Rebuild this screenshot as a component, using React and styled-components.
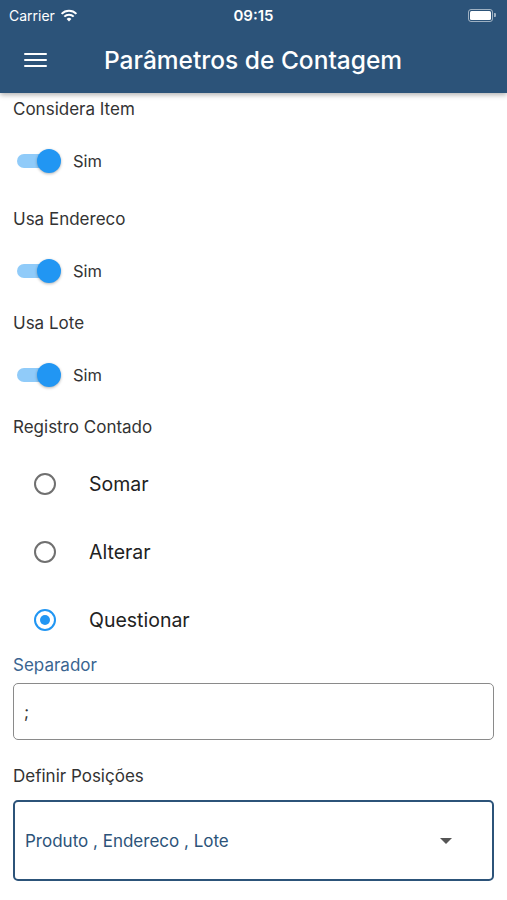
import styled, { createGlobalStyle } from "styled-components";

const GlobalStyle = createGlobalStyle`
    body {
        margin: 0;
        background: #fff;
        font-family: "Inter", "Liberation Sans", sans-serif;
    }
`;

const Page = styled.div`
    width: 507px;
    min-height: 900px;
    background: #fff;
`;

const Header = styled.header`
    background-color: #2c5379;
    box-shadow: 0 2px 5px rgba(0, 0, 0, 0.3);
    position: relative;
    z-index: 1;
`;

const StatusBar = styled.div`
    height: 30px;
    padding: 0 9px;
    display: grid;
    grid-template-columns: 1fr auto 1fr;
    align-items: center;
    color: #fff;
    font-size: 14px;
`;

const Carrier = styled.div`
    display: flex;
    align-items: center;
    gap: 5px;
`;

const Time = styled.div`
    font-weight: 600;
    font-size: 15px;
`;

const Battery = styled.div`
    justify-self: end;
    display: flex;
    align-items: center;
    margin-right: 2px;
`;

const BatteryBody = styled.div`
    width: 21px;
    height: 9px;
    border: 1.5px solid rgba(255, 255, 255, 0.55);
    border-radius: 3px;
    padding: 1px;
    box-sizing: content-box;

    &::after {
        content: "";
        display: block;
        width: 100%;
        height: 100%;
        background: #fff;
        border-radius: 1.5px;
    }
`;

const BatteryNub = styled.div`
    width: 2px;
    height: 4px;
    margin-left: 1px;
    background: rgba(255, 255, 255, 0.55);
    border-radius: 0 1px 1px 0;
`;

const AppBar = styled.div`
    height: 63px;
    display: flex;
    align-items: center;
    padding-left: 24px;
    padding-bottom: 3px;
    box-sizing: border-box;
`;

const MenuButton = styled.div`
    width: 23px;
    display: flex;
    flex-direction: column;
    gap: 3.5px;

    span {
        height: 2.5px;
        background: #fff;
        border-radius: 1px;
    }
`;

const Title = styled.h1`
    margin: 0 0 0 57px;
    color: #fff;
    font-size: 24.5px;
    font-weight: 500;
`;

const Content = styled.main`
    padding: 6px 13px 0;
`;

const FieldLabel = styled.div`
    font-size: 17px;
    line-height: 20px;
    color: ${(p) => (p.$accent ? "#3a6591" : "#333")};
    margin-top: ${(p) => p.$gap || 0}px;
`;

const ToggleRow = styled.div`
    height: 48px;
    margin-top: 18px;
    display: flex;
    align-items: center;
    gap: 13px;
    padding-left: 4px;
    font-size: 16.5px;
    color: #333;
`;

const Track = styled.div`
    position: relative;
    width: 40px;
    height: 14px;
    border-radius: 7px;
    background: #90cbf9;
    margin-right: 3px;
`;

const Thumb = styled.div`
    position: absolute;
    top: -5px;
    right: -4px;
    width: 24px;
    height: 24px;
    border-radius: 50%;
    background: #2196f3;
    box-shadow: 0 1px 3px rgba(0, 0, 0, 0.3);
`;

const RadioList = styled.div`
    margin-top: 13px;
    display: flex;
    flex-direction: column;
`;

const RadioRow = styled.div`
    height: 68px;
    display: flex;
    align-items: center;
    padding-left: 21px;
    gap: 33px;
    font-size: 19.5px;
    color: #222;
`;

const RadioCircle = styled.div`
    width: 18px;
    height: 18px;
    border-radius: 50%;
    border: 2px solid ${(p) => (p.$checked ? "#2196f3" : "#707070")};
    display: flex;
    align-items: center;
    justify-content: center;

    &::after {
        content: "";
        width: 10px;
        height: 10px;
        border-radius: 50%;
        background: ${(p) => (p.$checked ? "#2196f3" : "transparent")};
    }
`;

const TextBox = styled.div`
    margin-top: 8px;
    height: 57px;
    box-sizing: border-box;
    border: 1px solid #8a8a8a;
    border-radius: 5px;
    display: flex;
    align-items: center;
    padding: 0 10px;
    font-size: 17px;
    color: #333;
`;

const SelectBox = styled.div`
    margin-top: 14px;
    height: 81px;
    box-sizing: border-box;
    border: 2px solid #2c5379;
    border-radius: 5px;
    display: flex;
    align-items: center;
    justify-content: space-between;
    padding: 0 40px 0 10px;
    font-size: 17px;
    color: #2c5379;
`;

const Caret = styled.div`
    width: 0;
    height: 0;
    border-left: 6px solid transparent;
    border-right: 6px solid transparent;
    border-top: 6px solid #555;
`;

const toggles = [
    { label: "Considera Item", gap: 0 },
    { label: "Usa Endereco", gap: 24 },
    { label: "Usa Lote", gap: 18 },
];

const radios = [
    { label: "Somar", checked: false },
    { label: "Alterar", checked: false },
    { label: "Questionar", checked: true },
];

const WifiIcon = () => (
    <svg width="18" height="13" viewBox="0 0 18 13">
        <path d="M9 12.5 L6.6 9.9 A3.4 3.4 0 0 1 11.4 9.9 Z" fill="#fff" />
        <path d="M4.3 7.6 A6.6 6.6 0 0 1 13.7 7.6" stroke="#fff" strokeWidth="2" fill="none" />
        <path d="M1.6 4.9 A10.4 10.4 0 0 1 16.4 4.9" stroke="#fff" strokeWidth="2" fill="none" />
    </svg>
);

export default function App() {
    return (
        <Page>
            <GlobalStyle />
            <Header>
                <StatusBar>
                    <Carrier>
                        Carrier <WifiIcon />
                    </Carrier>
                    <Time>09:15</Time>
                    <Battery>
                        <BatteryBody />
                        <BatteryNub />
                    </Battery>
                </StatusBar>
                <AppBar>
                    <MenuButton>
                        <span />
                        <span />
                        <span />
                    </MenuButton>
                    <Title>Parâmetros de Contagem</Title>
                </AppBar>
            </Header>
            <Content>
                {toggles.map((t) => (
                    <div key={t.label}>
                        <FieldLabel $gap={t.gap}>{t.label}</FieldLabel>
                        <ToggleRow>
                            <Track>
                                <Thumb />
                            </Track>
                            Sim
                        </ToggleRow>
                    </div>
                ))}
                <FieldLabel $gap={18}>Registro Contado</FieldLabel>
                <RadioList>
                    {radios.map((r) => (
                        <RadioRow key={r.label}>
                            <RadioCircle $checked={r.checked} />
                            {r.label}
                        </RadioRow>
                    ))}
                </RadioList>
                <FieldLabel $accent $gap={1}>Separador</FieldLabel>
                <TextBox>;</TextBox>
                <FieldLabel $gap={26}>Definir Posições</FieldLabel>
                <SelectBox>
                    Produto , Endereco , Lote
                    <Caret />
                </SelectBox>
            </Content>
        </Page>
    );
}
